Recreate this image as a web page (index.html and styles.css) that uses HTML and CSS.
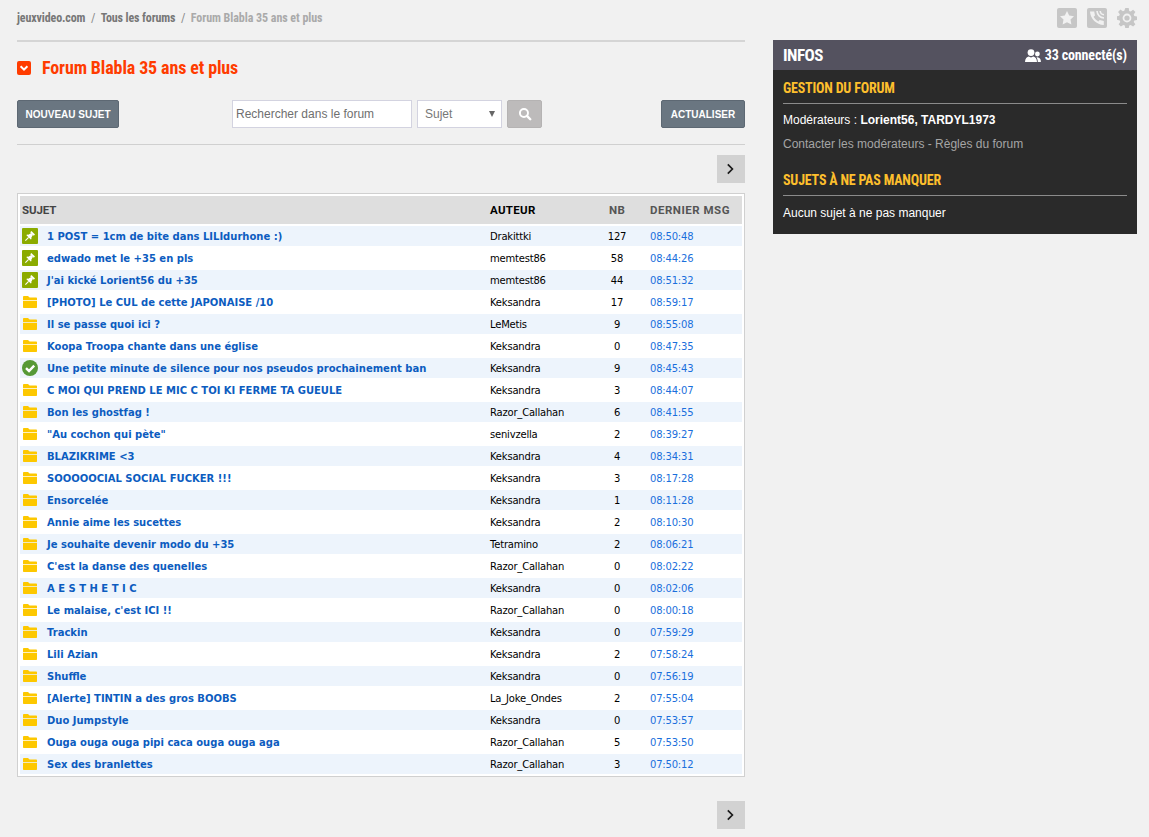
FILE: index.html
```html
<!DOCTYPE html>
<html lang="fr">
<head>
<meta charset="utf-8">
<title>Forum Blabla 35 ans et plus</title>
<link rel="stylesheet" href="styles.css">
</head>
<body>
<svg class="defs" width="0" height="0" aria-hidden="true">
  <symbol id="pin" viewBox="0 0 16 16">
    <rect width="16" height="16" rx="1" fill="#8bab00"/>
    <path d="M8.800 3.600 12.400 7.200" stroke="#fff" stroke-width="1.700" fill="none"/>
    <path d="M9.300 5 6.300 6.700 5 6.500 4.400 7.200 8.800 11.600 9.500 11 9.300 9.700 11 6.700Z" fill="#fff"/>
    <path d="M6.600 9.400 3.400 12.600" stroke="#fff" stroke-width="1.100" fill="none"/>
  </symbol>
  <symbol id="folder" viewBox="0 0 16 16">
    <path d="M1 3.200C1 2.500 1.400 2 2 2h4l1.600 1.600H14c.6 0 1 .4 1 1V6H1Z" fill="#fdc800"/>
    <path d="M1 6.800h14v6.200c0 .6-.4 1-1 1H2c-.6 0-1-.4-1-1Z" fill="#fdc800"/>
  </symbol>
  <symbol id="check" viewBox="0 0 16 16">
    <circle cx="8" cy="8" r="8" fill="#569936"/>
    <path d="M4 8.200 7 11 12.200 5.600" fill="none" stroke="#fff" stroke-width="2.400"/>
  </symbol>
</svg>
<div class="page">
  <main class="main">
    <nav class="crumbs">
      <a class="crumb">jeuxvideo.com</a><span class="sep">/</span><a class="crumb">Tous les forums</a><span class="sep">/</span><span class="crumb-current">Forum Blabla 35 ans et plus</span>
    </nav>
    <header class="title-row">
      <svg class="title-icon" viewBox="0 0 14 14" aria-hidden="true"><rect width="14" height="14" rx="2" fill="#ff3c00"/><path d="M3.600 5.200 7 8.600 10.400 5.200" fill="none" stroke="#fff" stroke-width="2"/></svg>
      <h1 class="title">Forum Blabla 35 ans et plus</h1>
    </header>
    <div class="toolbar">
      <button class="btn btn-new">NOUVEAU SUJET</button>
      <form class="search">
        <input class="search-input" type="text" placeholder="Rechercher dans le forum">
        <span class="search-select">Sujet</span>
        <button class="search-btn" type="button" aria-label="Rechercher">
          <svg viewBox="0 0 16 16" width="14" height="14"><circle cx="6.800" cy="6.800" r="4.600" fill="none" stroke="#fff" stroke-width="2.200"/><path d="M10.200 10.200 14 14" stroke="#fff" stroke-width="2.800" stroke-linecap="round"/></svg>
        </button>
      </form>
      <button class="btn btn-refresh">ACTUALISER</button>
    </div>
    <div class="pager"><a class="next"><svg viewBox="0 0 10 12" width="10" height="12"><path d="M1.800 1.400 6.400 6 1.800 10.600" fill="none" stroke="#1a1a1a" stroke-width="1.700"/></svg></a></div>
    <div class="list">
      <table class="topics">
        <colgroup><col class="c-subject"><col class="c-author"><col class="c-nb"><col class="c-last"></colgroup>
        <thead>
          <tr><th class="th-subject">SUJET</th><th class="th-author">AUTEUR</th><th class="th-nb">NB</th><th class="th-last">DERNIER MSG</th></tr>
        </thead>
        <tbody>
          <tr><td class="subject"><svg class="ico"><use href="#pin"/></svg><a>1 POST = 1cm de bite dans LILIdurhone :)</a></td><td class="author">Drakittki</td><td class="nb">127</td><td class="last">08:50:48</td></tr>
          <tr><td class="subject"><svg class="ico"><use href="#pin"/></svg><a>edwado met le +35 en pls</a></td><td class="author">memtest86</td><td class="nb">58</td><td class="last">08:44:26</td></tr>
          <tr><td class="subject"><svg class="ico"><use href="#pin"/></svg><a>J'ai kické Lorient56 du +35</a></td><td class="author">memtest86</td><td class="nb">44</td><td class="last">08:51:32</td></tr>
          <tr><td class="subject"><svg class="ico"><use href="#folder"/></svg><a>[PHOTO] Le CUL de cette JAPONAISE /10</a></td><td class="author">Keksandra</td><td class="nb">17</td><td class="last">08:59:17</td></tr>
          <tr><td class="subject"><svg class="ico"><use href="#folder"/></svg><a>Il se passe quoi ici ?</a></td><td class="author">LeMetis</td><td class="nb">9</td><td class="last">08:55:08</td></tr>
          <tr><td class="subject"><svg class="ico"><use href="#folder"/></svg><a>Koopa Troopa chante dans une église</a></td><td class="author">Keksandra</td><td class="nb">0</td><td class="last">08:47:35</td></tr>
          <tr><td class="subject"><svg class="ico"><use href="#check"/></svg><a>Une petite minute de silence pour nos pseudos prochainement ban</a></td><td class="author">Keksandra</td><td class="nb">9</td><td class="last">08:45:43</td></tr>
          <tr><td class="subject"><svg class="ico"><use href="#folder"/></svg><a>C MOI QUI PREND LE MIC C TOI KI FERME TA GUEULE</a></td><td class="author">Keksandra</td><td class="nb">3</td><td class="last">08:44:07</td></tr>
          <tr><td class="subject"><svg class="ico"><use href="#folder"/></svg><a>Bon les ghostfag !</a></td><td class="author">Razor_Callahan</td><td class="nb">6</td><td class="last">08:41:55</td></tr>
          <tr><td class="subject"><svg class="ico"><use href="#folder"/></svg><a>"Au cochon qui pète"</a></td><td class="author">senivzella</td><td class="nb">2</td><td class="last">08:39:27</td></tr>
          <tr><td class="subject"><svg class="ico"><use href="#folder"/></svg><a>BLAZIKRIME &lt;3</a></td><td class="author">Keksandra</td><td class="nb">4</td><td class="last">08:34:31</td></tr>
          <tr><td class="subject"><svg class="ico"><use href="#folder"/></svg><a>SOOOOOCIAL SOCIAL FUCKER !!!</a></td><td class="author">Keksandra</td><td class="nb">3</td><td class="last">08:17:28</td></tr>
          <tr><td class="subject"><svg class="ico"><use href="#folder"/></svg><a>Ensorcelée</a></td><td class="author">Keksandra</td><td class="nb">1</td><td class="last">08:11:28</td></tr>
          <tr><td class="subject"><svg class="ico"><use href="#folder"/></svg><a>Annie aime les sucettes</a></td><td class="author">Keksandra</td><td class="nb">2</td><td class="last">08:10:30</td></tr>
          <tr><td class="subject"><svg class="ico"><use href="#folder"/></svg><a>Je souhaite devenir modo du +35</a></td><td class="author">Tetramino</td><td class="nb">2</td><td class="last">08:06:21</td></tr>
          <tr><td class="subject"><svg class="ico"><use href="#folder"/></svg><a>C'est la danse des quenelles</a></td><td class="author">Razor_Callahan</td><td class="nb">0</td><td class="last">08:02:22</td></tr>
          <tr><td class="subject"><svg class="ico"><use href="#folder"/></svg><a>A E S T H E T I C</a></td><td class="author">Keksandra</td><td class="nb">0</td><td class="last">08:02:06</td></tr>
          <tr><td class="subject"><svg class="ico"><use href="#folder"/></svg><a>Le malaise, c'est ICI !!</a></td><td class="author">Razor_Callahan</td><td class="nb">0</td><td class="last">08:00:18</td></tr>
          <tr><td class="subject"><svg class="ico"><use href="#folder"/></svg><a>Trackin</a></td><td class="author">Keksandra</td><td class="nb">0</td><td class="last">07:59:29</td></tr>
          <tr><td class="subject"><svg class="ico"><use href="#folder"/></svg><a>Lili Azian</a></td><td class="author">Keksandra</td><td class="nb">2</td><td class="last">07:58:24</td></tr>
          <tr><td class="subject"><svg class="ico"><use href="#folder"/></svg><a>Shuffle</a></td><td class="author">Keksandra</td><td class="nb">0</td><td class="last">07:56:19</td></tr>
          <tr><td class="subject"><svg class="ico"><use href="#folder"/></svg><a>[Alerte] TINTIN a des gros BOOBS</a></td><td class="author">La_Joke_Ondes</td><td class="nb">2</td><td class="last">07:55:04</td></tr>
          <tr><td class="subject"><svg class="ico"><use href="#folder"/></svg><a>Duo Jumpstyle</a></td><td class="author">Keksandra</td><td class="nb">0</td><td class="last">07:53:57</td></tr>
          <tr><td class="subject"><svg class="ico"><use href="#folder"/></svg><a>Ouga ouga ouga pipi caca ouga ouga aga</a></td><td class="author">Razor_Callahan</td><td class="nb">5</td><td class="last">07:53:50</td></tr>
          <tr><td class="subject"><svg class="ico"><use href="#folder"/></svg><a>Sex des branlettes</a></td><td class="author">Razor_Callahan</td><td class="nb">3</td><td class="last">07:50:12</td></tr>
        </tbody>
      </table>
    </div>
    <div class="pager pager-bottom"><a class="next"><svg viewBox="0 0 10 12" width="10" height="12"><path d="M1.800 1.400 6.400 6 1.800 10.600" fill="none" stroke="#1a1a1a" stroke-width="1.700"/></svg></a></div>
  </main>
  <aside class="side">
    <div class="tools">
      <svg class="tool" viewBox="0 0 20 20" aria-hidden="true"><rect width="20" height="20" rx="2" fill="#c6c6c6"/><path d="M10 3 12.200 7.500 17 8.200 13.500 11.600 14.400 16.500 10 14.200 5.600 16.500 6.500 11.600 3 8.200 7.800 7.500Z" fill="#f1f1f1"/></svg>
      <svg class="tool" viewBox="0 0 20 20" aria-hidden="true"><rect width="20" height="20" rx="2" fill="#c6c6c6"/><path d="M3 3.500H7.200L8 7.400 6.600 8.800C7.800 10.800 9.400 12.300 11.300 13.400L12.700 12 16.800 13V17C9.500 16.800 3.400 10.800 3 3.500Z" fill="#f1f1f1"/><path d="M10 3C10.200 6.800 13.200 9.800 17 10M13.200 3C13.400 5 15 6.600 17 6.800" fill="none" stroke="#f1f1f1" stroke-width="1.600"/></svg>
      <svg class="tool" viewBox="0 0 20 20" aria-hidden="true"><path d="M8.300 0h3.400l.5 2.900 1.500.6 2.400-1.700 2.300 2.300-1.700 2.400.6 1.500 2.700.5v3.400l-2.700.5-.6 1.500 1.700 2.400-2.300 2.300-2.400-1.700-1.500.6-.5 2.900H8.300l-.5-2.900-1.500-.6-2.400 1.700-2.300-2.300 1.700-2.400-.6-1.500L0 11.700V8.300l2.200-.5.600-1.500-1.700-2.400 2.300-2.300 2.400 1.700 1.500-.6Z" fill="#c6c6c6"/><circle cx="10" cy="10" r="4.400" fill="#f1f1f1"/><circle cx="10" cy="10" r="2.600" fill="#c6c6c6"/></svg>
    </div>
    <section class="panel">
      <div class="panel-head">
        <h2 class="panel-title">INFOS</h2>
        <span class="online"><svg class="online-ico" viewBox="0 0 16 13" aria-hidden="true"><circle cx="6" cy="3.600" r="3.400" fill="#fff"/><path d="M0 13c0-3.600 2-5.300 3.800-5.600l2.200 1.200 2.200-1.200C10 7.700 12 9.400 12 13Z" fill="#fff"/><circle cx="12.400" cy="5" r="2.400" fill="#fff"/><path d="M12.800 13c0-2-.6-3.400-1.400-4.400l1-.4 1.500.6c1 .4 2 1.800 2 4.200Z" fill="#fff"/></svg>33 connecté(s)</span>
      </div>
      <div class="panel-body">
        <h3 class="panel-h">GESTION DU FORUM</h3>
        <p class="mods">Modérateurs : <strong>Lorient56, TARDYL1973</strong></p>
        <p class="links"><a>Contacter les modérateurs</a> - <a>Règles du forum</a></p>
        <h3 class="panel-h">SUJETS À NE PAS MANQUER</h3>
        <p class="none">Aucun sujet à ne pas manquer</p>
      </div>
    </section>
  </aside>
</div>
</body>
</html>
```
FILE: styles.css
```css
* { box-sizing: border-box; }
html, body { margin: 0; padding: 0; }
body { background: #f1f1f1; font-family: "Liberation Sans", Arial, sans-serif; color: #000; }
.defs { position: absolute; }
.page { display: flex; gap: 28px; padding: 0 12px 8px 17px; }
.main { width: 728px; flex: none; }
.side { width: 364px; flex: none; padding-top: 8px; }

.crumbs { height: 40px; padding-top: 11px; font: 700 12px/15px Roboto, sans-serif; font-stretch: 75%; letter-spacing: -.12px; color: #777; }
.crumb { color: #777; }
.sep { margin: 0 5.500px; color: #888; font-weight: 400; }
.crumb-current { color: #aaa; letter-spacing: -.05px; }

.title-row { display: flex; align-items: flex-start; border-top: 2px solid #d5d5d5; height: 60px; }
.title-icon { width: 14px; height: 14px; margin: 19px 11px 0 0; }
.title { margin: 14px 0 0; font: 700 18px/24px Roboto, sans-serif; font-stretch: 75%; letter-spacing: -.13px; color: #ff3c00; }

.toolbar { display: flex; height: 45px; border-bottom: 1px solid #d0d0d0; align-items: flex-start; }
.btn { height: 28px; border: 1px solid #5d6873; border-radius: 2px; background: #6a7681; color: #fff; font: 700 10px/28px "Liberation Sans", sans-serif; padding: 0; }
.btn-new { width: 102px; }
.btn-refresh { width: 84px; margin-left: auto; }
.search { display: flex; gap: 5px; margin-left: 113px; }
.search-input { width: 180px; height: 28px; border: 1px solid #d3d3e0; background: #fff; padding: 0 3px; font: 12px "Liberation Sans", sans-serif; color: #666; }
.search-input::placeholder { color: #6f6f6f; opacity: 1; }
.search-select { position: relative; width: 85px; height: 28px; border: 1px solid #d3d3e0; background: #fff; padding-left: 7px; font: 12px/26px "Liberation Sans", sans-serif; color: #777; }
.search-select::after { content: ""; position: absolute; right: 6px; top: 10px; border: 3px solid transparent; border-top: 6px solid #666; border-bottom: 0; }
.search-btn { width: 35px; height: 28px; border: 1px solid #b5b3b3; border-radius: 2px; background: #bdbbbb; padding: 0; display: flex; align-items: center; justify-content: center; }

.pager { display: flex; justify-content: flex-end; height: 48px; padding-top: 10px; }
.pager-bottom { height: 52px; padding-top: 24px; }
.next { width: 28px; height: 28px; background: #d2d2d2; display: flex; align-items: center; justify-content: center; }

.list { border: 1px solid #d0d0d0; background: #fff; padding: 0 2px; }
.topics { width: 722px; table-layout: fixed; border-collapse: separate; border-spacing: 0 2px; }
.c-subject { width: 468px; }
.c-author { width: 108px; }
.c-nb { width: 42px; }
.c-last { width: 104px; }
.topics th { height: 28px; background: #dedede; font: 700 11.500px/14px Roboto, sans-serif; letter-spacing: .3px; color: #555; text-align: left; padding: 0; }
.topics .th-subject { padding-left: 2px; color: #444; letter-spacing: -.1px; }
.topics .th-author { padding-left: 2px; color: #000; }
.topics .th-nb { text-align: center; }
.topics .th-last { padding-left: 12px; letter-spacing: .5px; }
.topics td { height: 20px; padding: 2px 0 0; font: 10px/18px "DejaVu Sans", sans-serif; letter-spacing: -.2px; vertical-align: top; }
.topics tbody tr:nth-child(odd) td { background-color: #edf4fc; }
.subject { white-space: nowrap; }
.topics .subject a { font: 700 10px/18px "DejaVu Sans", sans-serif; letter-spacing: 0; color: #0c5cc0; }
.ico { width: 16px; height: 16px; margin: 0 9px 0 2px; vertical-align: top; }
.topics .author { padding-left: 2px; }
.topics .nb { text-align: center; }
.topics .last { padding-left: 12px; color: #1a6fdc; }

.tools { display: flex; justify-content: flex-end; gap: 10px; height: 32px; }
.tool { width: 20px; height: 20px; }
.panel { background: #2a2a2a; height: 194px; }
.panel-head { display: flex; justify-content: space-between; align-items: center; height: 30px; background: #54525f; padding: 0 10px; color: #fff; }
.panel-title { margin: 0; font: 700 17px/30px Roboto, sans-serif; font-stretch: 75%; letter-spacing: -.5px; }
.online { display: flex; align-items: center; font: 700 14px/30px Roboto, sans-serif; font-stretch: 75%; letter-spacing: -.13px; }
.online-ico { width: 16px; height: 13px; margin-right: 4px; }
.panel-body { padding: 0 10px; }
.panel-h { margin: 0; height: 34px; font: 700 14px/36px Roboto, sans-serif; font-stretch: 75%; letter-spacing: -.2px; color: #fdbf2d; border-bottom: 1px solid #8b8b8b; }
.mods, .links, .none { margin: 0; font: 12px/16px "Liberation Sans", sans-serif; color: #fff; }
.mods { padding-top: 8px; }
.links { padding-top: 8px; color: #a5a5a5; height: 34px; }
.none { padding-top: 9px; }
```
